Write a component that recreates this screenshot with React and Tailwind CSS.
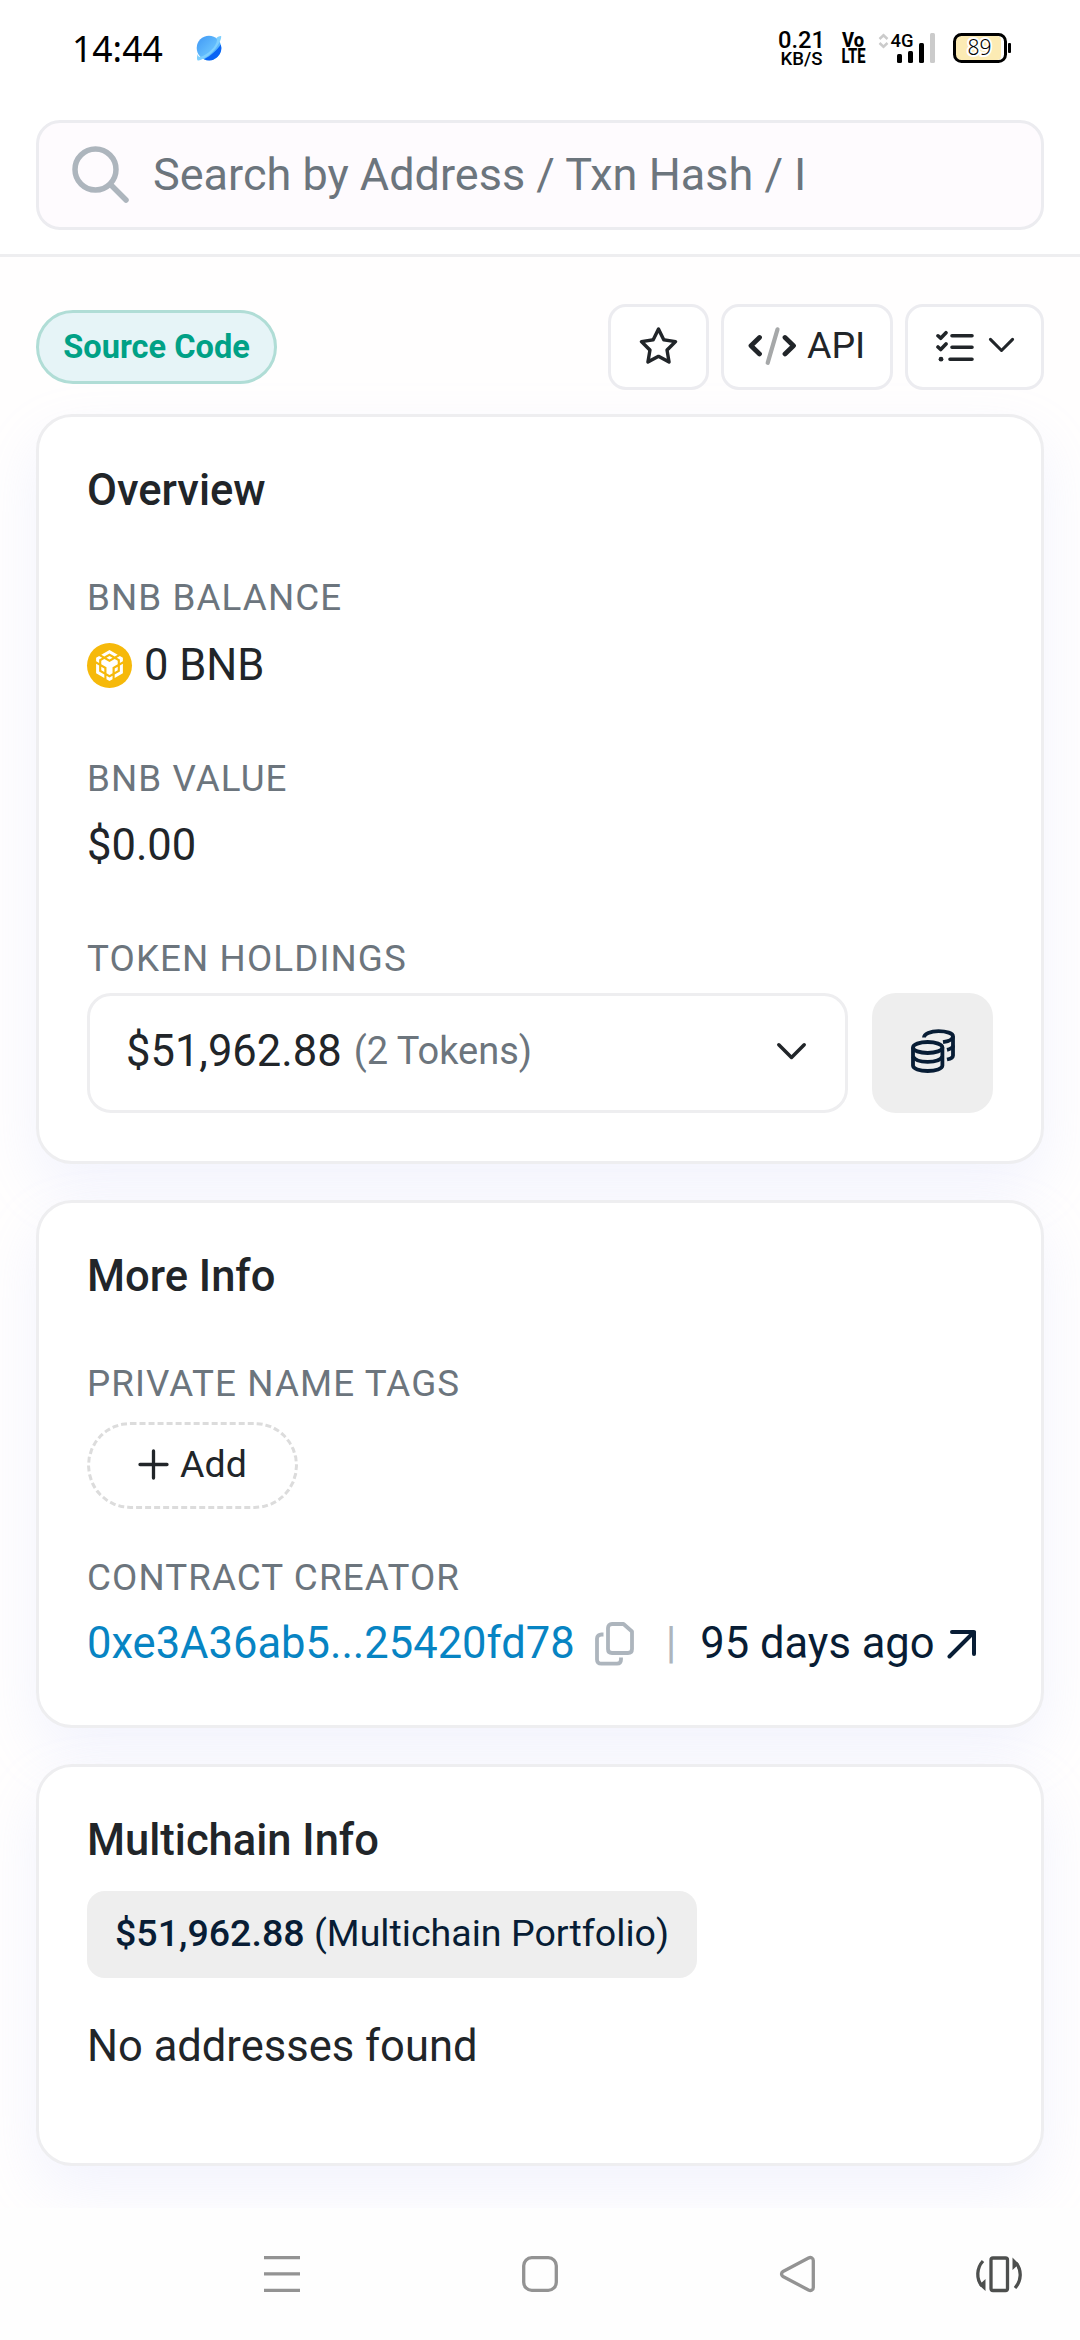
import React from 'react';
import { SiBnbchain } from 'react-icons/si';
import { FaRegStar } from 'react-icons/fa6';

function StatusBar() {
  return (
    <div className="h-[96px] shrink-0 pl-[72px] pr-[68px] flex items-center justify-between">
      <div className="flex items-center gap-[31px]">
        <span className="font-['Noto_Sans'] text-[35.5px] leading-[50px] text-black">14:44</span>
        <svg width="30" height="30" viewBox="0 0 30 30">
          <defs>
            <linearGradient id="planeta" x1="0" y1="0" x2="1" y2="1">
              <stop offset="0" stopColor="#3f97f5" />
              <stop offset="0.55" stopColor="#62bcfd" />
              <stop offset="1" stopColor="#3ea2fb" />
            </linearGradient>
          </defs>
          <circle cx="15" cy="15" r="12.3" fill="url(#planeta)" />
          <path d="M10 26.2C17 23 24 16 26.8 11.5A12.3 12.3 0 0 1 10 26.2Z" fill="#0a63f4" />
          <path d="M22.5 5C25 3 27.6 2.4 27.2 4C26.5 11 16 25 4.5 27.6C2.8 27.6 2.6 25 3.6 21C4 24 6 24.5 9 23C17 19 25 10 22.5 5Z" fill="#7fd0fe" />
        </svg>
      </div>

      <svg className="text-black" width="236" height="60" viewBox="776 18 236 60">
        <g fontFamily="Roboto, sans-serif" fill="currentColor">
          <text x="778" y="48.3" fontSize="24.5" fontWeight="500" textLength="47" lengthAdjust="spacingAndGlyphs">0.21</text>
          <text x="780.5" y="65" fontSize="18" fontWeight="500" textLength="42" lengthAdjust="spacingAndGlyphs">KB/S</text>
          <text x="842" y="47.3" fontSize="19.5" fontWeight="800" textLength="22" lengthAdjust="spacingAndGlyphs">Vo</text>
          <text x="841.5" y="63" fontSize="19.5" fontWeight="800" textLength="24" lengthAdjust="spacingAndGlyphs">LTE</text>
          <text x="890.5" y="47" fontSize="19" fontWeight="500" textLength="23" lengthAdjust="spacingAndGlyphs">4G</text>
        </g>
        <g fill="none" stroke="#cbcbcb" strokeWidth="2.5">
          <path d="M879.5 39l4-3.7 4 3.7" />
          <path d="M879.5 43l4 3.7 4-3.7" />
        </g>
        <rect x="897" y="54" width="5" height="9" rx="1.5" />
        <rect x="908" y="51" width="5" height="12" rx="1.5" />
        <rect x="919" y="43" width="5" height="20" rx="1.5" />
        <rect x="930" y="33" width="5" height="30" rx="1.5" fill="#cbcbcb" />
        <rect x="956" y="36" width="45" height="24" rx="4" fill="#fcebb4" />
        <rect x="954.5" y="34.5" width="51" height="27" rx="7" fill="none" stroke="#000" strokeWidth="3" />
        <rect x="1008" y="43" width="3" height="10" rx="1" />
        <text x="967.5" y="55" fontFamily="'Noto Sans', sans-serif" fontWeight="300" fontSize="21" textLength="24" lengthAdjust="spacingAndGlyphs" stroke="#fff" strokeWidth="4" paintOrder="stroke">89</text>
      </svg>
    </div>
  );
}

function SearchIcon() {
  return (
    <svg className="shrink-0" width="58" height="58" viewBox="0 0 58 58" fill="none" stroke="#adb5bd" strokeWidth="5.5" strokeLinecap="round">
      <circle cx="23.5" cy="23.5" r="20.5" />
      <path d="M38.5 38.5L54 54" />
    </svg>
  );
}

function CodeIcon() {
  return (
    <svg width="48" height="40" viewBox="0 0 48 40" fill="none" strokeLinecap="round" strokeLinejoin="round">
      <path d="M11.5 11.5L3 19.7L11.5 27.9M37 11.5L45.5 19.7L37 27.9" stroke="#212529" strokeWidth="4.8" />
      <path d="M29.5 3.3L19.7 36.8" stroke="#a6a8a9" strokeWidth="4.2" />
    </svg>
  );
}

function ListCheckIcon() {
  return (
    <svg width="38" height="34" viewBox="0 0 38 34" fill="none" stroke="#212529" strokeWidth="3.6" strokeLinecap="round" strokeLinejoin="round">
      <path d="M2 6.8L4.7 9.3L10 3.7M2 18L4.7 20.5L10 14.9" />
      <path d="M16 6.8H36M16 18.2H36M14 30.2H36" />
      <circle cx="5" cy="30.2" r="2.4" fill="#212529" stroke="none" />
    </svg>
  );
}

function Chevron({ ancho }) {
  return (
    <svg width={ancho} height={ancho * 0.6} viewBox="0 0 30 18" fill="none" stroke="#212529" strokeWidth="3.4" strokeLinecap="round" strokeLinejoin="round">
      <path d="M2.7 2.7L15 15L27.3 2.7" />
    </svg>
  );
}

function CoinsIcon() {
  return (
    <svg width="44" height="44" viewBox="0 0 44 44" fill="none" stroke="#081d35" strokeWidth="3.8" strokeLinejoin="round">
      {/* pila delantera */}
      <ellipse cx="16.7" cy="18.5" rx="14.7" ry="5.5" />
      <path d="M2 18.5V36.5C2 39.6 8.5 42 16.7 42S31.4 39.6 31.4 36.5V18.5" />
      <path d="M2 27.5C3.5 30.8 9 32.8 16.7 32.8S30 30.8 31.4 27.5" />
      {/* pila trasera */}
      <path d="M13 8.5C13 4.8 19.5 2.2 27.5 2.2S42 4.4 42 7.3S38 12.3 32 13.2" />
      <path d="M42 7.3V26.5C42 28.5 39.5 29.8 36 30.5" />
      <path d="M36 20.8C39.5 20 42 18.5 42 16.5" />
    </svg>
  );
}

function CopyIcon() {
  return (
    <svg className="shrink-0" width="40" height="44" viewBox="0 0 40 44" fill="none" stroke="#adb5bd" strokeWidth="3.8" strokeLinejoin="round">
      <path d="M17 2H28.5L37 9.5V27C37 29.5 35.5 31 33 31H17C14.5 31 13 29.5 13 27V6C13 3.5 14.5 2 17 2Z" />
      <path d="M8.5 12.5H6.5C4 12.5 2 14 2 16.5V37.5C2 40 3.5 41.7 6.5 41.7H22C24.5 41.7 26 40 26 37.5V35.5" />
    </svg>
  );
}

function Card({ titulo, className, children }) {
  return (
    <section className={`bg-white border-[3px] border-[#eeeef0] rounded-[36px] px-12 pt-[41px] shadow-[0_24px_58px_rgba(175,190,250,0.165)] ${className}`}>
      <h2 className="text-[43.5px] leading-[65px] font-medium">{titulo}</h2>
      {children}
    </section>
  );
}

function Label({ className, children }) {
  return (
    <h3 className={`text-[36.75px] leading-[55px] tracking-[1.1px] uppercase text-[#6c757d] ${className}`}>{children}</h3>
  );
}

export default function App() {
  return (
    <div className="w-[1080px] h-[2340px] overflow-hidden flex flex-col bg-[#fffefe] font-[Roboto,sans-serif] text-[#212529]">
      <header className="h-[257px] shrink-0 bg-white border-b-[3px] border-[#eeeef0]">
        <StatusBar />
        <div className="mx-9 mt-6 h-[110px] rounded-[24px] border-[3px] border-[#ececf0] bg-[#fefbfe] pl-[33px] flex items-center gap-[23px]">
          <SearchIcon />
          <span className="pb-[2px] text-[45px] leading-[65px] text-[#6c757d] whitespace-nowrap">Search by Address / Txn Hash / I</span>
        </div>
      </header>

      <main className="h-[1951px] shrink-0 overflow-hidden px-9 pt-[47px]">
        <div className="h-[86px] flex items-center justify-between">
          <span className="h-[74px] w-[241px] flex items-center justify-center rounded-full border-[3px] border-[#b0ddd6] bg-[#e6f4f7] text-[32.6px] font-bold text-[#00a186] whitespace-nowrap">
            Source Code
          </span>
          <div className="flex gap-3">
            <button className="w-[101px] h-[86px] pb-1 flex items-center justify-center bg-white border-[3px] border-[#ececf0] rounded-[18px]">
              <FaRegStar className="w-[41px] h-[37px]" />
            </button>
            <button className="w-[172px] h-[86px] pl-[24px] pb-[3px] flex items-center gap-[11px] bg-white border-[3px] border-[#ececf0] rounded-[18px]">
              <CodeIcon />
              <span className="text-[37.5px] leading-[55px]">API</span>
            </button>
            <button className="w-[139px] h-[86px] pl-[28px] pb-[3px] flex items-center gap-[14px] bg-white border-[3px] border-[#ececf0] rounded-[18px]">
              <ListCheckIcon />
              <Chevron ancho={27} />
            </button>
          </div>
        </div>

        <Card titulo="Overview" className="mt-6 h-[750px]">
          <Label className="mt-[47px]">BNB Balance</Label>
          <div className="mt-[8px] flex items-center gap-3">
            <span className="w-[45px] h-[45px] rounded-full bg-[#f6b90a] flex items-center justify-center">
              <SiBnbchain className="w-[31px] h-[31px] text-white" />
            </span>
            <span className="text-[43.5px] leading-[65px]">0 BNB</span>
          </div>

          <Label className="mt-[53px]">BNB Value</Label>
          <p className="mt-[7px] text-[43.5px] leading-[65px]">$0.00</p>

          <Label className="mt-[53px]">Token Holdings</Label>
          <div className="mt-[7px] flex gap-6">
            <button className="w-[761px] h-[120px] pl-[36px] pr-[38px] pb-1 flex items-center justify-between border-[3px] border-[#eeeef0] rounded-[24px]">
              <span className="flex items-center gap-3">
                <span className="text-[43.5px] leading-[65px]">$51,962.88</span>
                <span className="text-[38px] leading-[58px] text-[#6c757d]">(2 Tokens)</span>
              </span>
              <Chevron ancho={31} />
            </button>
            <button className="w-[121px] h-[120px] pb-[5px] flex items-center justify-center rounded-[24px] bg-[#eeeeee]">
              <CoinsIcon />
            </button>
          </div>
        </Card>

        <Card titulo="More Info" className="mt-9 h-[528px]">
          <Label className="mt-[47px]">Private Name Tags</Label>
          <button className="mt-[11px] w-[211px] h-[87px] pb-[3px] flex items-center justify-center gap-[11px] rounded-full border-[3px] border-dashed border-[#dcdcdc]">
            <svg width="31" height="31" viewBox="0 0 31 31" stroke="#212529" strokeWidth="3.3" strokeLinecap="round">
              <path d="M15.5 2V29M2 15.5H29" />
            </svg>
            <span className="text-[37.5px] leading-[55px]">Add</span>
          </button>

          <Label className="mt-[41px]">Contract Creator</Label>
          <div className="mt-[6px] flex items-center text-[43.5px] leading-[65px] whitespace-nowrap text-[#081d35]">
            <a className="text-[#0784c3]">0xe3A36ab5...25420fd78</a>
            <span className="ml-[20px]"><CopyIcon /></span>
            <span className="ml-[31px] text-[#adb5bd]">|</span>
            <span className="ml-[24px]">95 days ago</span>
            <svg className="ml-[12px]" width="30" height="30" viewBox="0 0 30 30" fill="none" stroke="#081d35" strokeWidth="4" strokeLinecap="round" strokeLinejoin="round">
              <path d="M5 3H27V25M27 3L2.5 27.5" />
            </svg>
          </div>
        </Card>

        <Card titulo="Multichain Info" className="mt-9 h-[402px]">
          <div className="mt-[18px] w-[610px] h-[87px] pb-[3px] flex items-center justify-center rounded-[18px] bg-[#eeeeee] text-[37.6px] text-[#081d35] whitespace-pre">
            <span><b className="font-medium">$51,962.88</b> (Multichain Portfolio)</span>
          </div>
          <p className="mt-[36px] text-[43.5px] leading-[65px]">No addresses found</p>
        </Card>
      </main>

      <nav className="h-[132px] shrink-0 bg-[#fefefe]">
        <svg width="1080" height="132" viewBox="0 2208 1080 132" fill="none" stroke="#939393" strokeWidth="3.3" strokeLinejoin="round">
          <path d="M264 2257.7H300M264 2273.8H300M264 2290.3H300" />
          <rect x="523.7" y="2257.7" width="32.6" height="32.6" rx="8" />
          <path d="M783 2271.5L808.5 2258C811 2256.8 813.3 2258 813.3 2260.5V2287.5C813.3 2290 811 2291.2 808.5 2290L783 2276.5C781 2275.2 781 2272.8 783 2271.5Z" />
          <g stroke="#4d4f4e">
            <rect x="991" y="2258" width="16.5" height="32.5" rx="2" />
            <path d="M983 2261C976.5 2268 976 2279 982 2286" />
            <path d="M1015 2288C1021.5 2281 1022 2270 1016 2263" />
            <path d="M985.5 2279V2291L979 2285ZM1012.5 2270V2257.5L1019 2264Z" fill="#4d4f4e" stroke="none" />
          </g>
        </svg>
      </nav>
    </div>
  );
}
